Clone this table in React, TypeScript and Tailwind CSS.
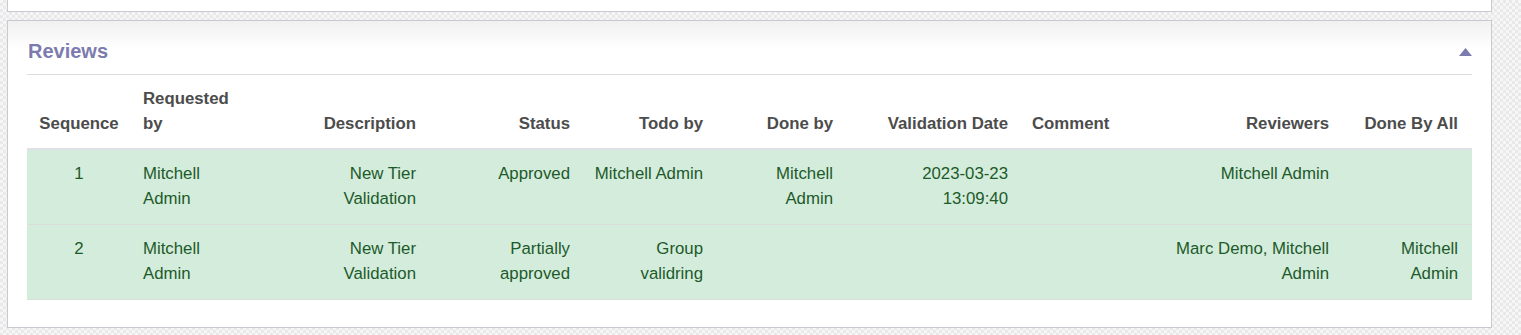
import React from 'react';

type Align = 'left' | 'center' | 'right';

interface Column {
  label: string[];
  width: number;
  align: Align;
}

const columns: Column[] = [
  { label: ['Sequence'], width: 104, align: 'center' },
  { label: ['Requested', 'by'], width: 129, align: 'left' },
  { label: ['Description'], width: 168, align: 'right' },
  { label: ['Status'], width: 154, align: 'right' },
  { label: ['Todo by'], width: 133, align: 'right' },
  { label: ['Done by'], width: 130, align: 'right' },
  { label: ['Validation Date'], width: 175, align: 'right' },
  { label: ['Comment'], width: 140, align: 'left' },
  { label: ['Reviewers'], width: 181, align: 'right' },
  { label: ['Done By All'], width: 131, align: 'right' },
];

// each cell holds its lines, as the table wraps them
const reviews: string[][][] = [
  [
    ['1'],
    ['Mitchell', 'Admin'],
    ['New Tier', 'Validation'],
    ['Approved'],
    ['Mitchell Admin'],
    ['Mitchell', 'Admin'],
    ['2023-03-23', '13:09:40'],
    [],
    ['Mitchell Admin'],
    [],
  ],
  [
    ['2'],
    ['Mitchell', 'Admin'],
    ['New Tier', 'Validation'],
    ['Partially', 'approved'],
    ['Group', 'validring'],
    [],
    [],
    [],
    ['Marc Demo, Mitchell', 'Admin'],
    ['Mitchell', 'Admin'],
  ],
];

const alignClass: Record<Align, string> = {
  left: 'text-left',
  center: 'text-center',
  right: 'text-right',
};

function Lines({ lines }: { lines: string[] }) {
  return (
    <>
      {lines.map((line, i) => (
        <div key={i} className="whitespace-nowrap">
          {line}
        </div>
      ))}
    </>
  );
}

export default function App() {
  return (
    <div
      className="w-[1521px] h-[335px] overflow-hidden bg-[repeating-conic-gradient(#e9e9e9_0_25%,#f6f6f6_0_50%)] bg-[length:6px_6px]"
      style={{ fontFamily: '"Liberation Sans", Arial, sans-serif' }}
    >
      {/* previous sheet, mostly scrolled away */}
      <div className="ml-[7px] w-[1485px] h-[12px] bg-white border border-t-0 border-[#c9c9d1]" />

      {/* Reviews sheet */}
      <div className="ml-[7px] mt-[8px] w-[1485px] h-[308px] border border-[#c9c9d1] bg-[linear-gradient(to_bottom,#f1f1f1,#ffffff_28px)] px-[19px]">
        <div className="h-[54px] pt-[6px] flex items-center justify-between border-b border-[#dcdcdf]">
          <span className="pl-px text-[20px] font-bold text-[#7c7bad] leading-6">Reviews</span>
          <svg width="13" height="8" viewBox="0 0 13 8" className="mt-[3px]">
            <polygon points="6.5,0 13,8 0,8" fill="#7c7bad" />
          </svg>
        </div>

        <table className="table-fixed border-collapse w-[1445px] text-[16.8px] leading-[25px]">
          <colgroup>
            {columns.map((col, i) => (
              <col key={i} style={{ width: col.width }} />
            ))}
          </colgroup>
          <thead>
            <tr className="border-b-2 border-[#dee2e6]">
              {columns.map((col, i) => (
                <th
                  key={i}
                  className={`pl-3 pr-3 last:pr-[14px] pt-[11px] pb-[12px] align-bottom font-bold text-[#4c4c4c] ${alignClass[col.align]}`}
                >
                  <Lines lines={col.label} />
                </th>
              ))}
            </tr>
          </thead>
          <tbody>
            {reviews.map((row, r) => (
              <tr key={r} className="bg-[#d4ecdb] border-b border-[#dadfdb]">
                {row.map((cell, c) => (
                  <td
                    key={c}
                    className={`pl-3 pr-3 last:pr-[14px] pt-[11px] pb-[13px] align-top text-[#1c5a2a] ${alignClass[columns[c].align]}`}
                  >
                    <Lines lines={cell} />
                  </td>
                ))}
              </tr>
            ))}
          </tbody>
        </table>
      </div>
    </div>
  );
}
